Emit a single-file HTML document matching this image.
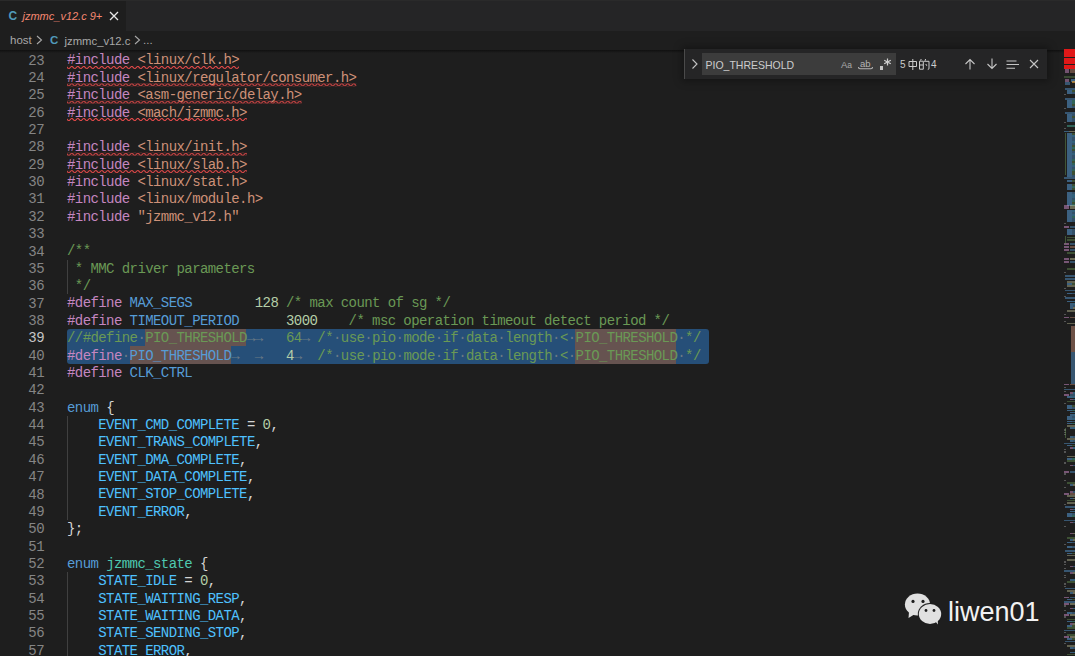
<!DOCTYPE html><html><head><meta charset="utf-8"><style>
*{margin:0;padding:0;box-sizing:border-box}
html,body{width:1075px;height:656px;overflow:hidden;background:#1e1e1e}
body{position:relative;font-family:"Liberation Sans",sans-serif}
.abs{position:absolute}
#tabbar{left:0;top:0;width:1075px;height:31px;background:#252526}
#topline{left:0;top:0;width:1075px;height:1px;background:#2a2a2a}
#tab{left:0;top:1px;width:126px;height:30px;background:#1e1e1e}
#crumbs{left:0;top:31px;width:1075px;height:18px;background:#1e1e1e}
.ln{position:absolute;left:0;width:44px;text-align:right;font-family:"Liberation Mono",monospace;font-size:14px;letter-spacing:-0.581px;color:#858585;white-space:pre}
.code{position:absolute;left:67px;font-family:"Liberation Mono",monospace;font-size:14px;letter-spacing:-0.581px;color:#D4D4D4;white-space:pre}
.kw{color:#C586C0}.st{color:#CE9178}.cm{color:#6A9955}.mac{color:#569CD6}.num{color:#B5CEA8}.en{color:#569CD6}.ty{color:#4EC9B0}.p{color:#D4D4D4}.em{color:#4FC1FF}
.ws{color:#6b7a86}
.guide{position:absolute;width:1px;background:#404040}
.sq{position:absolute;height:4px}
</style></head><body>
<div id="editor" class="abs" style="left:0;top:0;width:1075px;height:656px;overflow:hidden">

<div class="abs" style="left:67.0px;top:329.10px;width:642.0px;height:34.72px;background:#264F78;border-radius:3px"></div>
<div class="abs" style="left:145.20px;top:329.10px;width:101.16px;height:17.36px;background:rgba(234,92,0,0.33)"></div>
<div class="abs" style="left:575.30px;top:329.10px;width:101.16px;height:17.36px;background:rgba(234,92,0,0.33)"></div>
<div class="abs" style="left:129.56px;top:346.46px;width:101.16px;height:17.36px;background:rgba(234,92,0,0.33)"></div>
<div class="abs" style="left:575.30px;top:346.46px;width:101.16px;height:17.36px;background:rgba(234,92,0,0.33)"></div>
<div class="guide" style="left:67px;top:259.66px;height:34.72px"></div>
<div class="guide" style="left:67px;top:415.90px;height:104.16px"></div>
<div class="guide" style="left:67px;top:572.14px;height:86.80px"></div>
<div class="ln" style="top:35.18px;height:17.36px;line-height:17.36px;color:#858585">22</div>
<div class="ln" style="top:52.54px;height:17.36px;line-height:17.36px;color:#858585">23</div>
<div class="code" style="top:52.44px;height:17.36px;line-height:17.36px"><span class="kw">#include</span> <span class="st">&lt;linux/clk.h&gt;</span></div>
<div class="ln" style="top:69.90px;height:17.36px;line-height:17.36px;color:#858585">24</div>
<div class="code" style="top:69.80px;height:17.36px;line-height:17.36px"><span class="kw">#include</span> <span class="st">&lt;linux/regulator/consumer.h&gt;</span></div>
<div class="ln" style="top:87.26px;height:17.36px;line-height:17.36px;color:#858585">25</div>
<div class="code" style="top:87.16px;height:17.36px;line-height:17.36px"><span class="kw">#include</span> <span class="st">&lt;asm-generic/delay.h&gt;</span></div>
<div class="ln" style="top:104.62px;height:17.36px;line-height:17.36px;color:#858585">26</div>
<div class="code" style="top:104.52px;height:17.36px;line-height:17.36px"><span class="kw">#include</span> <span class="st">&lt;mach/jzmmc.h&gt;</span></div>
<div class="ln" style="top:121.98px;height:17.36px;line-height:17.36px;color:#858585">27</div>
<div class="ln" style="top:139.34px;height:17.36px;line-height:17.36px;color:#858585">28</div>
<div class="code" style="top:139.24px;height:17.36px;line-height:17.36px"><span class="kw">#include</span> <span class="st">&lt;linux/init.h&gt;</span></div>
<div class="ln" style="top:156.70px;height:17.36px;line-height:17.36px;color:#858585">29</div>
<div class="code" style="top:156.60px;height:17.36px;line-height:17.36px"><span class="kw">#include</span> <span class="st">&lt;linux/slab.h&gt;</span></div>
<div class="ln" style="top:174.06px;height:17.36px;line-height:17.36px;color:#858585">30</div>
<div class="code" style="top:173.96px;height:17.36px;line-height:17.36px"><span class="kw">#include</span> <span class="st">&lt;linux/stat.h&gt;</span></div>
<div class="ln" style="top:191.42px;height:17.36px;line-height:17.36px;color:#858585">31</div>
<div class="code" style="top:191.32px;height:17.36px;line-height:17.36px"><span class="kw">#include</span> <span class="st">&lt;linux/module.h&gt;</span></div>
<div class="ln" style="top:208.78px;height:17.36px;line-height:17.36px;color:#858585">32</div>
<div class="code" style="top:208.68px;height:17.36px;line-height:17.36px"><span class="kw">#include</span> <span class="st">"jzmmc_v12.h"</span></div>
<div class="ln" style="top:226.14px;height:17.36px;line-height:17.36px;color:#858585">33</div>
<div class="ln" style="top:243.50px;height:17.36px;line-height:17.36px;color:#858585">34</div>
<div class="code" style="top:243.40px;height:17.36px;line-height:17.36px"><span class="cm">/**</span></div>
<div class="ln" style="top:260.86px;height:17.36px;line-height:17.36px;color:#858585">35</div>
<div class="code" style="top:260.76px;height:17.36px;line-height:17.36px"><span class="cm"> * MMC driver parameters</span></div>
<div class="ln" style="top:278.22px;height:17.36px;line-height:17.36px;color:#858585">36</div>
<div class="code" style="top:278.12px;height:17.36px;line-height:17.36px"><span class="cm"> */</span></div>
<div class="ln" style="top:295.58px;height:17.36px;line-height:17.36px;color:#858585">37</div>
<div class="code" style="top:295.48px;height:17.36px;line-height:17.36px"><span class="kw">#define</span> <span class="mac">MAX_SEGS</span>        <span class="num">128</span> <span class="cm">/* max count of sg */</span></div>
<div class="ln" style="top:312.94px;height:17.36px;line-height:17.36px;color:#858585">38</div>
<div class="code" style="top:312.84px;height:17.36px;line-height:17.36px"><span class="kw">#define</span> <span class="mac">TIMEOUT_PERIOD</span>      <span class="num">3000</span>    <span class="cm">/* msc operation timeout detect period */</span></div>
<div class="ln" style="top:330.30px;height:17.36px;line-height:17.36px;color:#C6C6C6">39</div>
<div class="code" style="top:330.20px;height:17.36px;line-height:17.36px"><span class="cm">//#define</span><span class="ws">·</span><span class="cm">PIO_THRESHOLD</span><span class="ws">→</span><span class="ws">→</span>   <span class="cm">64</span><span class="ws">→</span> <span class="cm">/*</span><span class="ws">·</span><span class="cm">use</span><span class="ws">·</span><span class="cm">pio</span><span class="ws">·</span><span class="cm">mode</span><span class="ws">·</span><span class="cm">if</span><span class="ws">·</span><span class="cm">data</span><span class="ws">·</span><span class="cm">length</span><span class="ws">·</span><span class="cm">&lt;</span><span class="ws">·</span><span class="cm">PIO_THRESHOLD</span><span class="ws">·</span><span class="cm">*/</span></div>
<div class="ln" style="top:347.66px;height:17.36px;line-height:17.36px;color:#858585">40</div>
<div class="code" style="top:347.56px;height:17.36px;line-height:17.36px"><span class="kw">#define</span><span class="ws">·</span><span class="mac">PIO_THRESHOLD</span><span class="ws">→</span>  <span class="ws">→</span>   <span class="num">4</span><span class="ws">→</span>  <span class="cm">/*</span><span class="ws">·</span><span class="cm">use</span><span class="ws">·</span><span class="cm">pio</span><span class="ws">·</span><span class="cm">mode</span><span class="ws">·</span><span class="cm">if</span><span class="ws">·</span><span class="cm">data</span><span class="ws">·</span><span class="cm">length</span><span class="ws">·</span><span class="cm">&lt;</span><span class="ws">·</span><span class="cm">PIO_THRESHOLD</span><span class="ws">·</span><span class="cm">*/</span></div>
<div class="ln" style="top:365.02px;height:17.36px;line-height:17.36px;color:#858585">41</div>
<div class="code" style="top:364.92px;height:17.36px;line-height:17.36px"><span class="kw">#define</span> <span class="mac">CLK_CTRL</span></div>
<div class="ln" style="top:382.38px;height:17.36px;line-height:17.36px;color:#858585">42</div>
<div class="ln" style="top:399.74px;height:17.36px;line-height:17.36px;color:#858585">43</div>
<div class="code" style="top:399.64px;height:17.36px;line-height:17.36px"><span class="en">enum</span> <span class="p">{</span></div>
<div class="ln" style="top:417.10px;height:17.36px;line-height:17.36px;color:#858585">44</div>
<div class="code" style="top:417.00px;height:17.36px;line-height:17.36px">    <span class="em">EVENT_CMD_COMPLETE</span><span class="p"> = </span><span class="num">0</span><span class="p">,</span></div>
<div class="ln" style="top:434.46px;height:17.36px;line-height:17.36px;color:#858585">45</div>
<div class="code" style="top:434.36px;height:17.36px;line-height:17.36px">    <span class="em">EVENT_TRANS_COMPLETE</span><span class="p">,</span></div>
<div class="ln" style="top:451.82px;height:17.36px;line-height:17.36px;color:#858585">46</div>
<div class="code" style="top:451.72px;height:17.36px;line-height:17.36px">    <span class="em">EVENT_DMA_COMPLETE</span><span class="p">,</span></div>
<div class="ln" style="top:469.18px;height:17.36px;line-height:17.36px;color:#858585">47</div>
<div class="code" style="top:469.08px;height:17.36px;line-height:17.36px">    <span class="em">EVENT_DATA_COMPLETE</span><span class="p">,</span></div>
<div class="ln" style="top:486.54px;height:17.36px;line-height:17.36px;color:#858585">48</div>
<div class="code" style="top:486.44px;height:17.36px;line-height:17.36px">    <span class="em">EVENT_STOP_COMPLETE</span><span class="p">,</span></div>
<div class="ln" style="top:503.90px;height:17.36px;line-height:17.36px;color:#858585">49</div>
<div class="code" style="top:503.80px;height:17.36px;line-height:17.36px">    <span class="em">EVENT_ERROR</span><span class="p">,</span></div>
<div class="ln" style="top:521.26px;height:17.36px;line-height:17.36px;color:#858585">50</div>
<div class="code" style="top:521.16px;height:17.36px;line-height:17.36px"><span class="p">};</span></div>
<div class="ln" style="top:538.62px;height:17.36px;line-height:17.36px;color:#858585">51</div>
<div class="ln" style="top:555.98px;height:17.36px;line-height:17.36px;color:#858585">52</div>
<div class="code" style="top:555.88px;height:17.36px;line-height:17.36px"><span class="en">enum</span> <span class="ty">jzmmc_state</span> <span class="p">{</span></div>
<div class="ln" style="top:573.34px;height:17.36px;line-height:17.36px;color:#858585">53</div>
<div class="code" style="top:573.24px;height:17.36px;line-height:17.36px">    <span class="em">STATE_IDLE</span><span class="p"> = </span><span class="num">0</span><span class="p">,</span></div>
<div class="ln" style="top:590.70px;height:17.36px;line-height:17.36px;color:#858585">54</div>
<div class="code" style="top:590.60px;height:17.36px;line-height:17.36px">    <span class="em">STATE_WAITING_RESP</span><span class="p">,</span></div>
<div class="ln" style="top:608.06px;height:17.36px;line-height:17.36px;color:#858585">55</div>
<div class="code" style="top:607.96px;height:17.36px;line-height:17.36px">    <span class="em">STATE_WAITING_DATA</span><span class="p">,</span></div>
<div class="ln" style="top:625.42px;height:17.36px;line-height:17.36px;color:#858585">56</div>
<div class="code" style="top:625.32px;height:17.36px;line-height:17.36px">    <span class="em">STATE_SENDING_STOP</span><span class="p">,</span></div>
<div class="ln" style="top:642.78px;height:17.36px;line-height:17.36px;color:#858585">57</div>
<div class="code" style="top:642.68px;height:17.36px;line-height:17.36px">    <span class="em">STATE_ERROR</span><span class="p">,</span></div>
<div class="ln" style="top:660.14px;height:17.36px;line-height:17.36px;color:#858585">58</div>
</div>
<svg class="abs" style="left:0;top:0" width="1075" height="656"><defs><pattern id="sqp" patternUnits="userSpaceOnUse" x="67.00" y="0" width="6" height="3"><g fill="#F14C4C"><polygon points="5.5,0 2.5,3 1.1,3 4.1,0"/><polygon points="4,0 6,2 6,0.6 5.4,0"/><polygon points="0,2 1,3 2.4,3 0,0.6"/></g></pattern></defs>
<g transform="translate(0,65.94)"><rect x="67.0" y="0" width="172.04" height="3" fill="url(#sqp)"/></g>
<g transform="translate(0,83.30)"><rect x="67.0" y="0" width="289.34" height="3" fill="url(#sqp)"/></g>
<g transform="translate(0,100.66)"><rect x="67.0" y="0" width="234.60" height="3" fill="url(#sqp)"/></g>
<g transform="translate(0,118.02)"><rect x="67.0" y="0" width="179.86" height="3" fill="url(#sqp)"/></g>
<g transform="translate(0,152.74)"><rect x="67.0" y="0" width="179.86" height="3" fill="url(#sqp)"/></g>
<g transform="translate(0,170.10)"><rect x="67.0" y="0" width="179.86" height="3" fill="url(#sqp)"/></g>
</svg>

<div id="tabbar" class="abs"></div>
<div id="topline" class="abs"></div>
<div id="tab" class="abs"></div>
<div id="crumbs" class="abs"></div>
<div class="abs" style="left:0;top:49.5px;width:1064px;height:3px;background:linear-gradient(#101010,rgba(30,30,30,0))"></div>

<!-- tab -->
<div class="abs" style="left:8.5px;top:7.5px;font:bold 12px 'Liberation Sans',sans-serif;color:#519ABA;line-height:16px">C</div>
<div class="abs" style="left:22.5px;top:8px;font:italic 11px 'Liberation Sans',sans-serif;color:#F48771;line-height:16px;white-space:pre">jzmmc_v12.c 9+</div>
<svg class="abs" style="left:109px;top:11px" width="10" height="10" viewBox="0 0 10 10"><path d="M1 1 L9 9 M9 1 L1 9" stroke="#e8e8e8" stroke-width="1.3"/></svg>
<!-- breadcrumbs -->
<div class="abs" style="left:10px;top:32px;font:11.5px 'Liberation Sans',sans-serif;color:#a9a9a9;line-height:16px;white-space:pre">host</div>
<svg class="abs" style="left:36px;top:34px" width="7" height="12" viewBox="0 0 7 12"><path d="M1 2 L5.5 6 L1 10" stroke="#a9a9a9" stroke-width="1.1" fill="none"/></svg>
<div class="abs" style="left:50px;top:32px;font:bold 11.5px 'Liberation Sans',sans-serif;color:#519ABA;line-height:16px">C</div>
<div class="abs" style="left:64.5px;top:32.5px;font:11.3px 'Liberation Sans',sans-serif;color:#a9a9a9;line-height:16px;white-space:pre">jzmmc_v12.c</div>
<svg class="abs" style="left:134px;top:34px" width="7" height="12" viewBox="0 0 7 12"><path d="M1 2 L5.5 6 L1 10" stroke="#a9a9a9" stroke-width="1.1" fill="none"/></svg>
<div class="abs" style="left:143px;top:32px;font:11.5px 'Liberation Sans',sans-serif;color:#a9a9a9;line-height:16px;white-space:pre">...</div>
<!-- find widget -->
<div class="abs" style="left:684px;top:49px;width:363px;height:29.5px;background:#252526;box-shadow:0 0 8px 2px rgba(0,0,0,0.36)"></div>
<div class="abs" style="left:684px;top:49px;width:1px;height:29.5px;background:#4a4a4a"></div>
<svg class="abs" style="left:690px;top:57px" width="10" height="14" viewBox="0 0 10 14"><path d="M2.5 2.5 L7 7 L2.5 11.5" stroke="#c5c5c5" stroke-width="1.1" fill="none"/></svg>
<div class="abs" style="left:702px;top:53px;width:194px;height:22px;background:#3c3c3c"></div>
<div class="abs" style="left:705.5px;top:56.5px;font:10.5px 'Liberation Sans',sans-serif;color:#cccccc;line-height:16px;white-space:pre">PIO_THRESHOLD</div>
<div class="abs" style="left:841px;top:57.5px;font:9.5px 'Liberation Sans',sans-serif;color:#a9a9a9;line-height:14px;white-space:pre">A<span style="font-size:8.5px">a</span></div>
<div class="abs" style="left:860px;top:56.5px;font:9.5px 'Liberation Sans',sans-serif;color:#b5b5b5;line-height:14px;white-space:pre">ab</div>
<svg class="abs" style="left:857px;top:65px" width="17" height="6" viewBox="0 0 17 6"><path d="M1.5 2 Q1.5 3.8 3 3.8 H14 Q15.5 3.8 15.5 2" stroke="#b5b5b5" stroke-width="1.1" fill="none"/></svg>
<div class="abs" style="left:879.5px;top:66px;width:3.5px;height:3.5px;background:#c5c5c5"></div>
<svg class="abs" style="left:883px;top:57px" width="9" height="11" viewBox="0 0 9 11"><path d="M4.5 1.5 V8.5 M1.2 3.2 L7.8 6.8 M7.8 3.2 L1.2 6.8" stroke="#cfcfcf" stroke-width="1.2" fill="none"/></svg>
<div class="abs" style="left:900px;top:57px;font:10px 'Liberation Sans',sans-serif;color:#cccccc;line-height:16px;white-space:pre">5</div>
<svg class="abs" style="left:907px;top:58px" width="24" height="13" viewBox="0 0 24 13"><g stroke="#cccccc" stroke-width="1" fill="none"><path d="M2 3.5 H9.5 V8.5 H2 Z M5.8 1 V12"/><path d="M14.2 1 L13.6 2.6 M12.5 3.2 H16.3 V11.2 H12.5 Z M12.5 7 H16.3 M18.6 1 L17.6 4 M18.2 3.3 H22 V10.8 L20.8 11.5 M18.8 6 L19.8 7.8"/></g></svg>
<div class="abs" style="left:931px;top:57px;font:10px 'Liberation Sans',sans-serif;color:#cccccc;line-height:16px;white-space:pre">4</div>
<svg class="abs" style="left:963px;top:57px" width="14" height="14" viewBox="0 0 14 14"><path d="M7 2.5 V12.5 M2.5 7 L7 2.5 L11.5 7" stroke="#c5c5c5" stroke-width="1.1" fill="none"/></svg>
<svg class="abs" style="left:985px;top:57px" width="14" height="14" viewBox="0 0 14 14"><path d="M7 1.5 V11.5 M2.5 7 L7 11.5 L11.5 7" stroke="#c5c5c5" stroke-width="1.1" fill="none"/></svg>
<svg class="abs" style="left:1006px;top:57px" width="14" height="14" viewBox="0 0 14 14"><path d="M0.5 4 H10.5 M0.5 7.5 H13 M0.5 11.2 H9" stroke="#c5c5c5" stroke-width="1.1" fill="none"/></svg>
<svg class="abs" style="left:1028px;top:57px" width="12" height="14" viewBox="0 0 12 14"><path d="M2 3 L10 11 M10 3 L2 11" stroke="#c5c5c5" stroke-width="1.1" fill="none"/></svg>
<!-- wechat -->
<svg class="abs" style="left:900px;top:585px" width="50" height="45" viewBox="0 0 50 45">
<g fill="#e0e0e0">
<ellipse cx="17.5" cy="19.5" rx="12.6" ry="11"/>
<path d="M9 27 L8.5 33 L15 29 Z"/>
</g>
<ellipse cx="30" cy="29" rx="12.2" ry="11" fill="#1e1e1e"/>
<g fill="#e0e0e0">
<ellipse cx="30" cy="29" rx="11.2" ry="10"/>
<path d="M35 36 L38 39.5 L37.5 33 Z"/>
</g>
<g fill="#1e1e1e">
<circle cx="13" cy="16.4" r="1.6"/><circle cx="23" cy="16.4" r="1.6"/>
<circle cx="26" cy="25.5" r="1.4"/><circle cx="34" cy="25.5" r="1.4"/>
</g>
</svg>
<div class="abs" style="left:948px;top:594.5px;font:27px 'Liberation Sans',sans-serif;color:#f2f2f2;line-height:34px;white-space:pre">liwen01</div>

<div class="abs" style="left:1064px;top:49.3px;width:11px;height:7.9px;background:#e01818;opacity:1.00"></div>
<div class="abs" style="left:1064px;top:57.8px;width:11px;height:6.1px;background:#e01818;opacity:1.00"></div>
<div class="abs" style="left:1064px;top:65.0px;width:11px;height:3.8px;background:#e01818;opacity:1.00"></div>
<div class="abs" style="left:1065px;top:69.2px;width:4px;height:3.5px;background:#C586C0;opacity:0.50"></div>
<div class="abs" style="left:1070px;top:69.2px;width:5px;height:3.5px;background:#CE9178;opacity:0.41"></div>
<div class="abs" style="left:1064px;top:75.5px;width:11px;height:2px;background:#6A9955;opacity:0.36"></div>
<div class="abs" style="left:1065px;top:78.5px;width:4px;height:3.5px;background:#C586C0;opacity:0.50"></div>
<div class="abs" style="left:1071px;top:78.5px;width:4px;height:3.5px;background:#569CD6;opacity:0.54"></div>
<div class="abs" style="left:1072px;top:81.0px;width:3px;height:2px;background:#e8a33c;opacity:0.63"></div>
<div class="abs" style="left:1065px;top:82.0px;width:5px;height:3px;background:#569CD6;opacity:0.45"></div>
<div class="abs" style="left:1065px;top:88.0px;width:10px;height:1.5px;background:#569CD6;opacity:0.45"></div>
<div class="abs" style="left:1067px;top:90.0px;width:5px;height:1.5px;background:#569CD6;opacity:0.54"></div>
<div class="abs" style="left:1072px;top:90.0px;width:3px;height:1.5px;background:#6A9955;opacity:0.41"></div>
<div class="abs" style="left:1067px;top:92.0px;width:5px;height:1.5px;background:#569CD6;opacity:0.54"></div>
<div class="abs" style="left:1072px;top:92.0px;width:3px;height:1.5px;background:#569CD6;opacity:0.41"></div>
<div class="abs" style="left:1064px;top:94.0px;width:2px;height:1.2px;background:#9a9a9a;opacity:0.45"></div>
<div class="abs" style="left:1065px;top:98.0px;width:10px;height:1.5px;background:#569CD6;opacity:0.45"></div>
<div class="abs" style="left:1067px;top:100.0px;width:5px;height:1.5px;background:#569CD6;opacity:0.54"></div>
<div class="abs" style="left:1072px;top:100.0px;width:3px;height:1.5px;background:#4EC9B0;opacity:0.41"></div>
<div class="abs" style="left:1067px;top:102.0px;width:5px;height:1.5px;background:#569CD6;opacity:0.54"></div>
<div class="abs" style="left:1072px;top:102.0px;width:3px;height:1.5px;background:#4EC9B0;opacity:0.41"></div>
<div class="abs" style="left:1067px;top:104.0px;width:5px;height:1.5px;background:#569CD6;opacity:0.54"></div>
<div class="abs" style="left:1072px;top:104.0px;width:3px;height:1.5px;background:#6A9955;opacity:0.41"></div>
<div class="abs" style="left:1067px;top:106.0px;width:5px;height:1.5px;background:#569CD6;opacity:0.54"></div>
<div class="abs" style="left:1072px;top:106.0px;width:3px;height:1.5px;background:#569CD6;opacity:0.41"></div>
<div class="abs" style="left:1064px;top:108.0px;width:2px;height:1.2px;background:#9a9a9a;opacity:0.45"></div>
<div class="abs" style="left:1065px;top:112.0px;width:10px;height:1.5px;background:#569CD6;opacity:0.45"></div>
<div class="abs" style="left:1067px;top:114.0px;width:5px;height:1.5px;background:#569CD6;opacity:0.54"></div>
<div class="abs" style="left:1072px;top:114.0px;width:3px;height:1.5px;background:#569CD6;opacity:0.41"></div>
<div class="abs" style="left:1067px;top:116.0px;width:5px;height:1.5px;background:#569CD6;opacity:0.54"></div>
<div class="abs" style="left:1072px;top:116.0px;width:3px;height:1.5px;background:#6A9955;opacity:0.41"></div>
<div class="abs" style="left:1067px;top:118.0px;width:5px;height:1.5px;background:#569CD6;opacity:0.54"></div>
<div class="abs" style="left:1072px;top:118.0px;width:3px;height:1.5px;background:#569CD6;opacity:0.41"></div>
<div class="abs" style="left:1067px;top:120.0px;width:5px;height:1.5px;background:#569CD6;opacity:0.54"></div>
<div class="abs" style="left:1072px;top:120.0px;width:3px;height:1.5px;background:#569CD6;opacity:0.41"></div>
<div class="abs" style="left:1064px;top:122.0px;width:2px;height:1.2px;background:#9a9a9a;opacity:0.45"></div>
<div class="abs" style="left:1067px;top:125.0px;width:8px;height:1.5px;background:#4EC9B0;opacity:0.41"></div>
<div class="abs" style="left:1064px;top:128.0px;width:2px;height:1.2px;background:#9a9a9a;opacity:0.45"></div>
<div class="abs" style="left:1064px;top:130.5px;width:5px;height:1.5px;background:#569CD6;opacity:0.50"></div>
<div class="abs" style="left:1069px;top:130.5px;width:6px;height:1.5px;background:#DCDCAA;opacity:0.41"></div>
<div class="abs" style="left:1067px;top:133.0px;width:5px;height:1.5px;background:#569CD6;opacity:0.54"></div>
<div class="abs" style="left:1072px;top:133.0px;width:3px;height:1.5px;background:#6A9955;opacity:0.41"></div>
<div class="abs" style="left:1067px;top:135.0px;width:5px;height:1.5px;background:#569CD6;opacity:0.54"></div>
<div class="abs" style="left:1072px;top:135.0px;width:3px;height:1.5px;background:#4FC1FF;opacity:0.41"></div>
<div class="abs" style="left:1067px;top:137.0px;width:5px;height:1.5px;background:#569CD6;opacity:0.54"></div>
<div class="abs" style="left:1072px;top:137.0px;width:3px;height:1.5px;background:#569CD6;opacity:0.41"></div>
<div class="abs" style="left:1067px;top:139.0px;width:5px;height:1.5px;background:#569CD6;opacity:0.54"></div>
<div class="abs" style="left:1072px;top:139.0px;width:3px;height:1.5px;background:#569CD6;opacity:0.41"></div>
<div class="abs" style="left:1067px;top:141.0px;width:5px;height:1.5px;background:#569CD6;opacity:0.54"></div>
<div class="abs" style="left:1072px;top:141.0px;width:3px;height:1.5px;background:#4FC1FF;opacity:0.41"></div>
<div class="abs" style="left:1067px;top:143.0px;width:5px;height:1.5px;background:#569CD6;opacity:0.54"></div>
<div class="abs" style="left:1072px;top:143.0px;width:3px;height:1.5px;background:#569CD6;opacity:0.41"></div>
<div class="abs" style="left:1067px;top:145.0px;width:5px;height:1.5px;background:#569CD6;opacity:0.54"></div>
<div class="abs" style="left:1072px;top:145.0px;width:3px;height:1.5px;background:#6A9955;opacity:0.41"></div>
<div class="abs" style="left:1067px;top:147.0px;width:5px;height:1.5px;background:#569CD6;opacity:0.54"></div>
<div class="abs" style="left:1072px;top:147.0px;width:3px;height:1.5px;background:#4EC9B0;opacity:0.41"></div>
<div class="abs" style="left:1067px;top:149.0px;width:5px;height:1.5px;background:#569CD6;opacity:0.54"></div>
<div class="abs" style="left:1072px;top:149.0px;width:3px;height:1.5px;background:#6A9955;opacity:0.41"></div>
<div class="abs" style="left:1067px;top:151.0px;width:5px;height:1.5px;background:#569CD6;opacity:0.54"></div>
<div class="abs" style="left:1072px;top:151.0px;width:3px;height:1.5px;background:#569CD6;opacity:0.41"></div>
<div class="abs" style="left:1067px;top:153.0px;width:5px;height:1.5px;background:#569CD6;opacity:0.54"></div>
<div class="abs" style="left:1072px;top:153.0px;width:3px;height:1.5px;background:#4FC1FF;opacity:0.41"></div>
<div class="abs" style="left:1067px;top:155.0px;width:5px;height:1.5px;background:#569CD6;opacity:0.54"></div>
<div class="abs" style="left:1072px;top:155.0px;width:3px;height:1.5px;background:#569CD6;opacity:0.41"></div>
<div class="abs" style="left:1067px;top:157.0px;width:5px;height:1.5px;background:#569CD6;opacity:0.54"></div>
<div class="abs" style="left:1072px;top:157.0px;width:3px;height:1.5px;background:#569CD6;opacity:0.41"></div>
<div class="abs" style="left:1067px;top:159.0px;width:5px;height:1.5px;background:#569CD6;opacity:0.54"></div>
<div class="abs" style="left:1072px;top:159.0px;width:3px;height:1.5px;background:#4EC9B0;opacity:0.41"></div>
<div class="abs" style="left:1067px;top:161.0px;width:5px;height:1.5px;background:#569CD6;opacity:0.54"></div>
<div class="abs" style="left:1072px;top:161.0px;width:3px;height:1.5px;background:#6A9955;opacity:0.41"></div>
<div class="abs" style="left:1067px;top:163.0px;width:5px;height:1.5px;background:#569CD6;opacity:0.54"></div>
<div class="abs" style="left:1072px;top:163.0px;width:3px;height:1.5px;background:#4EC9B0;opacity:0.41"></div>
<div class="abs" style="left:1067px;top:165.0px;width:5px;height:1.5px;background:#569CD6;opacity:0.54"></div>
<div class="abs" style="left:1072px;top:165.0px;width:3px;height:1.5px;background:#4FC1FF;opacity:0.41"></div>
<div class="abs" style="left:1067px;top:167.0px;width:5px;height:1.5px;background:#569CD6;opacity:0.54"></div>
<div class="abs" style="left:1072px;top:167.0px;width:3px;height:1.5px;background:#569CD6;opacity:0.41"></div>
<div class="abs" style="left:1067px;top:169.0px;width:5px;height:1.5px;background:#569CD6;opacity:0.54"></div>
<div class="abs" style="left:1072px;top:169.0px;width:3px;height:1.5px;background:#4EC9B0;opacity:0.41"></div>
<div class="abs" style="left:1067px;top:171.0px;width:5px;height:1.5px;background:#569CD6;opacity:0.54"></div>
<div class="abs" style="left:1072px;top:171.0px;width:3px;height:1.5px;background:#6A9955;opacity:0.41"></div>
<div class="abs" style="left:1067px;top:173.0px;width:5px;height:1.5px;background:#569CD6;opacity:0.54"></div>
<div class="abs" style="left:1072px;top:173.0px;width:3px;height:1.5px;background:#6A9955;opacity:0.41"></div>
<div class="abs" style="left:1067px;top:175.0px;width:5px;height:1.5px;background:#569CD6;opacity:0.54"></div>
<div class="abs" style="left:1072px;top:175.0px;width:3px;height:1.5px;background:#569CD6;opacity:0.41"></div>
<div class="abs" style="left:1064px;top:177.0px;width:11px;height:1.5px;background:#569CD6;opacity:0.45"></div>
<div class="abs" style="left:1067px;top:180.0px;width:5px;height:1.5px;background:#569CD6;opacity:0.54"></div>
<div class="abs" style="left:1072px;top:180.0px;width:3px;height:1.5px;background:#6A9955;opacity:0.41"></div>
<div class="abs" style="left:1067px;top:184.0px;width:5px;height:1.5px;background:#569CD6;opacity:0.54"></div>
<div class="abs" style="left:1072px;top:184.0px;width:3px;height:1.5px;background:#6A9955;opacity:0.41"></div>
<div class="abs" style="left:1067px;top:186.0px;width:5px;height:1.5px;background:#569CD6;opacity:0.54"></div>
<div class="abs" style="left:1072px;top:186.0px;width:3px;height:1.5px;background:#4EC9B0;opacity:0.41"></div>
<div class="abs" style="left:1067px;top:188.0px;width:5px;height:1.5px;background:#569CD6;opacity:0.54"></div>
<div class="abs" style="left:1072px;top:188.0px;width:3px;height:1.5px;background:#6A9955;opacity:0.41"></div>
<div class="abs" style="left:1067px;top:192.0px;width:5px;height:1.5px;background:#569CD6;opacity:0.54"></div>
<div class="abs" style="left:1072px;top:192.0px;width:3px;height:1.5px;background:#569CD6;opacity:0.41"></div>
<div class="abs" style="left:1067px;top:194.0px;width:5px;height:1.5px;background:#569CD6;opacity:0.54"></div>
<div class="abs" style="left:1072px;top:194.0px;width:3px;height:1.5px;background:#4FC1FF;opacity:0.41"></div>
<div class="abs" style="left:1067px;top:196.0px;width:5px;height:1.5px;background:#569CD6;opacity:0.54"></div>
<div class="abs" style="left:1072px;top:196.0px;width:3px;height:1.5px;background:#4FC1FF;opacity:0.41"></div>
<div class="abs" style="left:1067px;top:198.0px;width:5px;height:1.5px;background:#569CD6;opacity:0.54"></div>
<div class="abs" style="left:1072px;top:198.0px;width:3px;height:1.5px;background:#569CD6;opacity:0.41"></div>
<div class="abs" style="left:1067px;top:200.0px;width:5px;height:1.5px;background:#569CD6;opacity:0.54"></div>
<div class="abs" style="left:1072px;top:200.0px;width:3px;height:1.5px;background:#4EC9B0;opacity:0.41"></div>
<div class="abs" style="left:1067px;top:202.0px;width:5px;height:1.5px;background:#569CD6;opacity:0.54"></div>
<div class="abs" style="left:1072px;top:202.0px;width:3px;height:1.5px;background:#6A9955;opacity:0.41"></div>
<div class="abs" style="left:1067px;top:204.0px;width:5px;height:1.5px;background:#569CD6;opacity:0.54"></div>
<div class="abs" style="left:1072px;top:204.0px;width:3px;height:1.5px;background:#4EC9B0;opacity:0.41"></div>
<div class="abs" style="left:1064px;top:205.0px;width:5px;height:1.5px;background:#C586C0;opacity:0.54"></div>
<div class="abs" style="left:1070px;top:205.0px;width:5px;height:1.5px;background:#DCDCAA;opacity:0.41"></div>
<div class="abs" style="left:1064px;top:207.0px;width:5px;height:1.5px;background:#C586C0;opacity:0.54"></div>
<div class="abs" style="left:1070px;top:207.0px;width:5px;height:1.5px;background:#DCDCAA;opacity:0.41"></div>
<div class="abs" style="left:1067px;top:210.0px;width:5px;height:1.5px;background:#569CD6;opacity:0.54"></div>
<div class="abs" style="left:1072px;top:210.0px;width:3px;height:1.5px;background:#4FC1FF;opacity:0.41"></div>
<div class="abs" style="left:1067px;top:212.0px;width:5px;height:1.5px;background:#569CD6;opacity:0.54"></div>
<div class="abs" style="left:1072px;top:212.0px;width:3px;height:1.5px;background:#569CD6;opacity:0.41"></div>
<div class="abs" style="left:1067px;top:214.0px;width:5px;height:1.5px;background:#569CD6;opacity:0.54"></div>
<div class="abs" style="left:1072px;top:214.0px;width:3px;height:1.5px;background:#4FC1FF;opacity:0.41"></div>
<div class="abs" style="left:1067px;top:216.0px;width:5px;height:1.5px;background:#569CD6;opacity:0.54"></div>
<div class="abs" style="left:1072px;top:216.0px;width:3px;height:1.5px;background:#4EC9B0;opacity:0.41"></div>
<div class="abs" style="left:1067px;top:218.0px;width:5px;height:1.5px;background:#569CD6;opacity:0.54"></div>
<div class="abs" style="left:1072px;top:218.0px;width:3px;height:1.5px;background:#569CD6;opacity:0.41"></div>
<div class="abs" style="left:1067px;top:220.0px;width:5px;height:1.5px;background:#569CD6;opacity:0.54"></div>
<div class="abs" style="left:1072px;top:220.0px;width:3px;height:1.5px;background:#569CD6;opacity:0.41"></div>
<div class="abs" style="left:1064px;top:222.5px;width:2px;height:1.2px;background:#9a9a9a;opacity:0.45"></div>
<div class="abs" style="left:1064px;top:226.0px;width:5px;height:1.5px;background:#C586C0;opacity:0.54"></div>
<div class="abs" style="left:1070px;top:226.0px;width:5px;height:1.5px;background:#569CD6;opacity:0.41"></div>
<div class="abs" style="left:1067px;top:229.0px;width:5px;height:1.5px;background:#569CD6;opacity:0.54"></div>
<div class="abs" style="left:1072px;top:229.0px;width:3px;height:1.5px;background:#569CD6;opacity:0.41"></div>
<div class="abs" style="left:1067px;top:231.0px;width:5px;height:1.5px;background:#569CD6;opacity:0.54"></div>
<div class="abs" style="left:1072px;top:231.0px;width:3px;height:1.5px;background:#569CD6;opacity:0.41"></div>
<div class="abs" style="left:1067px;top:233.0px;width:5px;height:1.5px;background:#569CD6;opacity:0.54"></div>
<div class="abs" style="left:1072px;top:233.0px;width:3px;height:1.5px;background:#569CD6;opacity:0.41"></div>
<div class="abs" style="left:1067px;top:236.5px;width:8px;height:1.5px;background:#6A9955;opacity:0.41"></div>
<div class="abs" style="left:1067px;top:239.0px;width:8px;height:1.5px;background:#6A9955;opacity:0.41"></div>
<div class="abs" style="left:1064px;top:243.0px;width:5px;height:1.5px;background:#C586C0;opacity:0.54"></div>
<div class="abs" style="left:1070px;top:243.0px;width:5px;height:1.5px;background:#569CD6;opacity:0.41"></div>
<div class="abs" style="left:1064px;top:246.0px;width:5px;height:1.5px;background:#C586C0;opacity:0.54"></div>
<div class="abs" style="left:1070px;top:246.0px;width:5px;height:1.5px;background:#CE9178;opacity:0.41"></div>
<div class="abs" style="left:1064px;top:249.0px;width:5px;height:1.5px;background:#C586C0;opacity:0.54"></div>
<div class="abs" style="left:1070px;top:249.0px;width:5px;height:1.5px;background:#569CD6;opacity:0.41"></div>
<div class="abs" style="left:1067px;top:252.0px;width:8px;height:1.5px;background:#6A9955;opacity:0.41"></div>
<div class="abs" style="left:1064px;top:258.0px;width:5px;height:1.5px;background:#C586C0;opacity:0.54"></div>
<div class="abs" style="left:1070px;top:258.0px;width:5px;height:1.5px;background:#DCDCAA;opacity:0.41"></div>
<div class="abs" style="left:1064px;top:261.0px;width:5px;height:1.5px;background:#C586C0;opacity:0.54"></div>
<div class="abs" style="left:1070px;top:261.0px;width:5px;height:1.5px;background:#569CD6;opacity:0.41"></div>
<div class="abs" style="left:1067px;top:268.0px;width:8px;height:1.5px;background:#6A9955;opacity:0.41"></div>
<div class="abs" style="left:1064px;top:271.5px;width:2px;height:1.2px;background:#9a9a9a;opacity:0.45"></div>
<div class="abs" style="left:1065px;top:275.0px;width:10px;height:1.5px;background:#569CD6;opacity:0.45"></div>
<div class="abs" style="left:1065px;top:278.0px;width:10px;height:1.5px;background:#569CD6;opacity:0.45"></div>
<div class="abs" style="left:1067px;top:281.0px;width:8px;height:1.5px;background:#DCDCAA;opacity:0.36"></div>
<div class="abs" style="left:1067px;top:283.0px;width:5px;height:1.5px;background:#569CD6;opacity:0.54"></div>
<div class="abs" style="left:1072px;top:283.0px;width:3px;height:1.5px;background:#6A9955;opacity:0.41"></div>
<div class="abs" style="left:1067px;top:285.0px;width:8px;height:1.5px;background:#DCDCAA;opacity:0.36"></div>
<div class="abs" style="left:1064px;top:287.5px;width:2px;height:1.2px;background:#9a9a9a;opacity:0.45"></div>
<div class="abs" style="left:1065px;top:289.5px;width:10px;height:1.5px;background:#569CD6;opacity:0.45"></div>
<div class="abs" style="left:1067px;top:292.5px;width:5px;height:1.5px;background:#569CD6;opacity:0.54"></div>
<div class="abs" style="left:1072px;top:292.5px;width:3px;height:1.5px;background:#569CD6;opacity:0.41"></div>
<div class="abs" style="left:1064px;top:295.5px;width:2px;height:1.2px;background:#9a9a9a;opacity:0.45"></div>
<div class="abs" style="left:1065px;top:297.0px;width:10px;height:1.5px;background:#569CD6;opacity:0.45"></div>
<div class="abs" style="left:1067px;top:300.5px;width:5px;height:1.5px;background:#569CD6;opacity:0.54"></div>
<div class="abs" style="left:1072px;top:300.5px;width:3px;height:1.5px;background:#4FC1FF;opacity:0.41"></div>
<div class="abs" style="left:1070px;top:303.0px;width:3px;height:1.5px;background:#569CD6;opacity:0.50"></div>
<div class="abs" style="left:1073px;top:303.0px;width:2px;height:1.5px;background:#4FC1FF;opacity:0.41"></div>
<div class="abs" style="left:1070px;top:305.0px;width:3px;height:1.5px;background:#569CD6;opacity:0.50"></div>
<div class="abs" style="left:1073px;top:305.0px;width:2px;height:1.5px;background:#569CD6;opacity:0.41"></div>
<div class="abs" style="left:1070px;top:307.0px;width:3px;height:1.5px;background:#569CD6;opacity:0.50"></div>
<div class="abs" style="left:1073px;top:307.0px;width:2px;height:1.5px;background:#DCDCAA;opacity:0.41"></div>
<div class="abs" style="left:1067px;top:310.0px;width:8px;height:1.5px;background:#DCDCAA;opacity:0.36"></div>
<div class="abs" style="left:1064px;top:313.5px;width:2px;height:1.2px;background:#9a9a9a;opacity:0.45"></div>
<div class="abs" style="left:1064px;top:316.5px;width:5px;height:1.5px;background:#C586C0;opacity:0.54"></div>
<div class="abs" style="left:1070px;top:316.5px;width:5px;height:1.5px;background:#CE9178;opacity:0.41"></div>
<div class="abs" style="left:1064px;top:320.5px;width:2px;height:1.2px;background:#9a9a9a;opacity:0.45"></div>
<div class="abs" style="left:1067px;top:322.5px;width:8px;height:1.5px;background:#DCDCAA;opacity:0.36"></div>
<div class="abs" style="left:1071px;top:326.0px;width:4px;height:1.5px;background:#CE9178;opacity:0.45"></div>
<div class="abs" style="left:1071px;top:328.0px;width:4px;height:1.5px;background:#CE9178;opacity:0.45"></div>
<div class="abs" style="left:1071px;top:330.0px;width:4px;height:1.5px;background:#CE9178;opacity:0.45"></div>
<div class="abs" style="left:1071px;top:332.0px;width:4px;height:1.5px;background:#CE9178;opacity:0.45"></div>
<div class="abs" style="left:1071px;top:334.0px;width:4px;height:1.5px;background:#CE9178;opacity:0.45"></div>
<div class="abs" style="left:1071px;top:336.0px;width:4px;height:1.5px;background:#CE9178;opacity:0.45"></div>
<div class="abs" style="left:1071px;top:338.0px;width:4px;height:1.5px;background:#CE9178;opacity:0.45"></div>
<div class="abs" style="left:1071px;top:340.0px;width:4px;height:1.5px;background:#CE9178;opacity:0.45"></div>
<div class="abs" style="left:1071px;top:342.0px;width:4px;height:1.5px;background:#CE9178;opacity:0.45"></div>
<div class="abs" style="left:1071px;top:344.0px;width:4px;height:1.5px;background:#CE9178;opacity:0.45"></div>
<div class="abs" style="left:1071px;top:346.0px;width:4px;height:1.5px;background:#CE9178;opacity:0.45"></div>
<div class="abs" style="left:1071px;top:348.0px;width:4px;height:1.5px;background:#CE9178;opacity:0.45"></div>
<div class="abs" style="left:1071px;top:350.0px;width:4px;height:1.5px;background:#CE9178;opacity:0.45"></div>
<div class="abs" style="left:1071px;top:352.0px;width:4px;height:1.5px;background:#569CD6;opacity:0.45"></div>
<div class="abs" style="left:1071px;top:354.0px;width:4px;height:1.5px;background:#569CD6;opacity:0.45"></div>
<div class="abs" style="left:1071px;top:356.0px;width:4px;height:1.5px;background:#569CD6;opacity:0.45"></div>
<div class="abs" style="left:1071px;top:358.0px;width:4px;height:1.5px;background:#569CD6;opacity:0.45"></div>
<div class="abs" style="left:1071px;top:360.0px;width:4px;height:1.5px;background:#569CD6;opacity:0.45"></div>
<div class="abs" style="left:1071px;top:362.0px;width:4px;height:1.5px;background:#569CD6;opacity:0.45"></div>
<div class="abs" style="left:1071px;top:364.0px;width:4px;height:1.5px;background:#569CD6;opacity:0.45"></div>
<div class="abs" style="left:1071px;top:366.0px;width:4px;height:1.5px;background:#569CD6;opacity:0.45"></div>
<div class="abs" style="left:1071px;top:368.0px;width:4px;height:1.5px;background:#569CD6;opacity:0.45"></div>
<div class="abs" style="left:1071px;top:370.0px;width:4px;height:1.5px;background:#569CD6;opacity:0.45"></div>
<div class="abs" style="left:1071px;top:372.0px;width:4px;height:1.5px;background:#569CD6;opacity:0.45"></div>
<div class="abs" style="left:1071px;top:374.0px;width:4px;height:1.5px;background:#569CD6;opacity:0.45"></div>
<div class="abs" style="left:1071px;top:376.0px;width:4px;height:1.5px;background:#569CD6;opacity:0.45"></div>
<div class="abs" style="left:1071px;top:378.0px;width:4px;height:1.5px;background:#569CD6;opacity:0.45"></div>
<div class="abs" style="left:1071px;top:380.0px;width:4px;height:1.5px;background:#569CD6;opacity:0.45"></div>
<div class="abs" style="left:1071px;top:382.0px;width:4px;height:1.5px;background:#569CD6;opacity:0.45"></div>
<div class="abs" style="left:1064px;top:383.5px;width:5px;height:1.5px;background:#C586C0;opacity:0.54"></div>
<div class="abs" style="left:1070px;top:383.5px;width:5px;height:1.5px;background:#CE9178;opacity:0.41"></div>
<div class="abs" style="left:1064px;top:386.5px;width:2px;height:1.2px;background:#9a9a9a;opacity:0.45"></div>
<div class="abs" style="left:1064px;top:388.5px;width:11px;height:1.5px;background:#569CD6;opacity:0.45"></div>
<div class="abs" style="left:1064px;top:390.5px;width:2px;height:1.2px;background:#9a9a9a;opacity:0.45"></div>
<div class="abs" style="left:1070px;top:392.0px;width:3px;height:1.5px;background:#C586C0;opacity:0.50"></div>
<div class="abs" style="left:1073px;top:392.0px;width:2px;height:1.5px;background:#4FC1FF;opacity:0.41"></div>
<div class="abs" style="left:1064px;top:394.2px;width:5px;height:1.5px;background:#C586C0;opacity:0.54"></div>
<div class="abs" style="left:1070px;top:394.2px;width:5px;height:1.5px;background:#569CD6;opacity:0.41"></div>
<div class="abs" style="left:1067px;top:396.4px;width:5px;height:1.5px;background:#569CD6;opacity:0.54"></div>
<div class="abs" style="left:1072px;top:396.4px;width:3px;height:1.5px;background:#4FC1FF;opacity:0.41"></div>
<div class="abs" style="left:1070px;top:398.6px;width:3px;height:1.5px;background:#C586C0;opacity:0.50"></div>
<div class="abs" style="left:1073px;top:398.6px;width:2px;height:1.5px;background:#4FC1FF;opacity:0.41"></div>
<div class="abs" style="left:1067px;top:400.8px;width:8px;height:1.5px;background:#6A9955;opacity:0.41"></div>
<div class="abs" style="left:1064px;top:403.0px;width:2px;height:1.2px;background:#9a9a9a;opacity:0.45"></div>
<div class="abs" style="left:1067px;top:405.2px;width:5px;height:1.5px;background:#569CD6;opacity:0.54"></div>
<div class="abs" style="left:1072px;top:405.2px;width:3px;height:1.5px;background:#6A9955;opacity:0.41"></div>
<div class="abs" style="left:1067px;top:407.4px;width:5px;height:1.5px;background:#569CD6;opacity:0.54"></div>
<div class="abs" style="left:1072px;top:407.4px;width:3px;height:1.5px;background:#569CD6;opacity:0.41"></div>
<div class="abs" style="left:1067px;top:409.6px;width:5px;height:1.5px;background:#569CD6;opacity:0.54"></div>
<div class="abs" style="left:1072px;top:409.6px;width:3px;height:1.5px;background:#4EC9B0;opacity:0.41"></div>
<div class="abs" style="left:1070px;top:411.8px;width:3px;height:1.5px;background:#569CD6;opacity:0.50"></div>
<div class="abs" style="left:1073px;top:411.8px;width:2px;height:1.5px;background:#4FC1FF;opacity:0.41"></div>
<div class="abs" style="left:1070px;top:414.0px;width:3px;height:1.5px;background:#569CD6;opacity:0.50"></div>
<div class="abs" style="left:1073px;top:414.0px;width:2px;height:1.5px;background:#4FC1FF;opacity:0.41"></div>
<div class="abs" style="left:1067px;top:416.2px;width:5px;height:1.5px;background:#569CD6;opacity:0.54"></div>
<div class="abs" style="left:1072px;top:416.2px;width:3px;height:1.5px;background:#569CD6;opacity:0.41"></div>
<div class="abs" style="left:1067px;top:418.4px;width:5px;height:1.5px;background:#569CD6;opacity:0.54"></div>
<div class="abs" style="left:1072px;top:418.4px;width:3px;height:1.5px;background:#4FC1FF;opacity:0.41"></div>
<div class="abs" style="left:1067px;top:420.6px;width:5px;height:1.5px;background:#569CD6;opacity:0.54"></div>
<div class="abs" style="left:1072px;top:420.6px;width:3px;height:1.5px;background:#569CD6;opacity:0.41"></div>
<div class="abs" style="left:1067px;top:422.8px;width:5px;height:1.5px;background:#569CD6;opacity:0.54"></div>
<div class="abs" style="left:1072px;top:422.8px;width:3px;height:1.5px;background:#4EC9B0;opacity:0.41"></div>
<div class="abs" style="left:1067px;top:425.0px;width:8px;height:1.5px;background:#DCDCAA;opacity:0.36"></div>
<div class="abs" style="left:1070px;top:427.2px;width:3px;height:1.5px;background:#569CD6;opacity:0.50"></div>
<div class="abs" style="left:1073px;top:427.2px;width:2px;height:1.5px;background:#4FC1FF;opacity:0.41"></div>
<div class="abs" style="left:1064px;top:429.4px;width:2px;height:1.2px;background:#9a9a9a;opacity:0.45"></div>
<div class="abs" style="left:1064px;top:431.6px;width:2px;height:1.2px;background:#9a9a9a;opacity:0.45"></div>
<div class="abs" style="left:1064px;top:433.8px;width:2px;height:1.2px;background:#9a9a9a;opacity:0.45"></div>
<div class="abs" style="left:1070px;top:436.0px;width:3px;height:1.5px;background:#569CD6;opacity:0.50"></div>
<div class="abs" style="left:1073px;top:436.0px;width:2px;height:1.5px;background:#569CD6;opacity:0.41"></div>
<div class="abs" style="left:1067px;top:438.2px;width:8px;height:1.5px;background:#DCDCAA;opacity:0.36"></div>
<div class="abs" style="left:1070px;top:440.4px;width:3px;height:1.5px;background:#569CD6;opacity:0.50"></div>
<div class="abs" style="left:1073px;top:440.4px;width:2px;height:1.5px;background:#569CD6;opacity:0.41"></div>
<div class="abs" style="left:1064px;top:442.6px;width:11px;height:1.5px;background:#569CD6;opacity:0.45"></div>
<div class="abs" style="left:1067px;top:444.8px;width:5px;height:1.5px;background:#569CD6;opacity:0.54"></div>
<div class="abs" style="left:1072px;top:444.8px;width:3px;height:1.5px;background:#6A9955;opacity:0.41"></div>
<div class="abs" style="left:1070px;top:447.0px;width:3px;height:1.5px;background:#C586C0;opacity:0.50"></div>
<div class="abs" style="left:1073px;top:447.0px;width:2px;height:1.5px;background:#4FC1FF;opacity:0.41"></div>
<div class="abs" style="left:1064px;top:449.2px;width:2px;height:1.2px;background:#9a9a9a;opacity:0.45"></div>
<div class="abs" style="left:1064px;top:451.4px;width:2px;height:1.2px;background:#9a9a9a;opacity:0.45"></div>
<div class="abs" style="left:1067px;top:455.8px;width:8px;height:1.5px;background:#DCDCAA;opacity:0.36"></div>
<div class="abs" style="left:1067px;top:458.0px;width:5px;height:1.5px;background:#569CD6;opacity:0.54"></div>
<div class="abs" style="left:1072px;top:458.0px;width:3px;height:1.5px;background:#4EC9B0;opacity:0.41"></div>
<div class="abs" style="left:1067px;top:460.2px;width:8px;height:1.5px;background:#6A9955;opacity:0.41"></div>
<div class="abs" style="left:1064px;top:462.4px;width:2px;height:1.2px;background:#9a9a9a;opacity:0.45"></div>
<div class="abs" style="left:1070px;top:464.6px;width:3px;height:1.5px;background:#C586C0;opacity:0.50"></div>
<div class="abs" style="left:1073px;top:464.6px;width:2px;height:1.5px;background:#569CD6;opacity:0.41"></div>
<div class="abs" style="left:1064px;top:471.2px;width:5px;height:1.5px;background:#C586C0;opacity:0.54"></div>
<div class="abs" style="left:1070px;top:471.2px;width:5px;height:1.5px;background:#569CD6;opacity:0.41"></div>
<div class="abs" style="left:1064px;top:473.4px;width:2px;height:1.2px;background:#9a9a9a;opacity:0.45"></div>
<div class="abs" style="left:1064px;top:480.0px;width:2px;height:1.2px;background:#9a9a9a;opacity:0.45"></div>
<div class="abs" style="left:1067px;top:482.2px;width:8px;height:1.5px;background:#6A9955;opacity:0.41"></div>
<div class="abs" style="left:1070px;top:484.4px;width:3px;height:1.5px;background:#569CD6;opacity:0.50"></div>
<div class="abs" style="left:1073px;top:484.4px;width:2px;height:1.5px;background:#DCDCAA;opacity:0.41"></div>
<div class="abs" style="left:1064px;top:486.6px;width:2px;height:1.2px;background:#9a9a9a;opacity:0.45"></div>
<div class="abs" style="left:1070px;top:491.0px;width:3px;height:1.5px;background:#C586C0;opacity:0.50"></div>
<div class="abs" style="left:1073px;top:491.0px;width:2px;height:1.5px;background:#569CD6;opacity:0.41"></div>
<div class="abs" style="left:1064px;top:493.2px;width:5px;height:1.5px;background:#C586C0;opacity:0.54"></div>
<div class="abs" style="left:1070px;top:493.2px;width:5px;height:1.5px;background:#CE9178;opacity:0.41"></div>
<div class="abs" style="left:1067px;top:495.4px;width:8px;height:1.5px;background:#DCDCAA;opacity:0.36"></div>
<div class="abs" style="left:1070px;top:497.6px;width:3px;height:1.5px;background:#569CD6;opacity:0.50"></div>
<div class="abs" style="left:1073px;top:497.6px;width:2px;height:1.5px;background:#DCDCAA;opacity:0.41"></div>
<div class="abs" style="left:1067px;top:499.8px;width:8px;height:1.5px;background:#6A9955;opacity:0.41"></div>
<div class="abs" style="left:1067px;top:502.0px;width:8px;height:1.5px;background:#DCDCAA;opacity:0.36"></div>
<div class="abs" style="left:1064px;top:504.2px;width:2px;height:1.2px;background:#9a9a9a;opacity:0.45"></div>
<div class="abs" style="left:1065px;top:506.4px;width:10px;height:1.5px;background:#569CD6;opacity:0.45"></div>
<div class="abs" style="left:1070px;top:508.6px;width:3px;height:1.5px;background:#C586C0;opacity:0.50"></div>
<div class="abs" style="left:1073px;top:508.6px;width:2px;height:1.5px;background:#4FC1FF;opacity:0.41"></div>
<div class="abs" style="left:1070px;top:510.8px;width:3px;height:1.5px;background:#569CD6;opacity:0.50"></div>
<div class="abs" style="left:1073px;top:510.8px;width:2px;height:1.5px;background:#4FC1FF;opacity:0.41"></div>
<div class="abs" style="left:1067px;top:513.0px;width:5px;height:1.5px;background:#569CD6;opacity:0.54"></div>
<div class="abs" style="left:1072px;top:513.0px;width:3px;height:1.5px;background:#569CD6;opacity:0.41"></div>
<div class="abs" style="left:1067px;top:515.2px;width:5px;height:1.5px;background:#569CD6;opacity:0.54"></div>
<div class="abs" style="left:1072px;top:515.2px;width:3px;height:1.5px;background:#4EC9B0;opacity:0.41"></div>
<div class="abs" style="left:1064px;top:519.6px;width:11px;height:1.5px;background:#569CD6;opacity:0.45"></div>
<div class="abs" style="left:1070px;top:521.8px;width:3px;height:1.5px;background:#C586C0;opacity:0.50"></div>
<div class="abs" style="left:1073px;top:521.8px;width:2px;height:1.5px;background:#569CD6;opacity:0.41"></div>
<div class="abs" style="left:1064px;top:526.2px;width:2px;height:1.2px;background:#9a9a9a;opacity:0.45"></div>
<div class="abs" style="left:1070px;top:532.8px;width:3px;height:1.5px;background:#C586C0;opacity:0.50"></div>
<div class="abs" style="left:1073px;top:532.8px;width:2px;height:1.5px;background:#DCDCAA;opacity:0.41"></div>
<div class="abs" style="left:1067px;top:537.2px;width:8px;height:1.5px;background:#6A9955;opacity:0.41"></div>
<div class="abs" style="left:1070px;top:539.4px;width:3px;height:1.5px;background:#569CD6;opacity:0.50"></div>
<div class="abs" style="left:1073px;top:539.4px;width:2px;height:1.5px;background:#DCDCAA;opacity:0.41"></div>
<div class="abs" style="left:1067px;top:541.6px;width:5px;height:1.5px;background:#569CD6;opacity:0.54"></div>
<div class="abs" style="left:1072px;top:541.6px;width:3px;height:1.5px;background:#569CD6;opacity:0.41"></div>
<div class="abs" style="left:1064px;top:543.8px;width:2px;height:1.2px;background:#9a9a9a;opacity:0.45"></div>
<div class="abs" style="left:1067px;top:546.0px;width:5px;height:1.5px;background:#569CD6;opacity:0.54"></div>
<div class="abs" style="left:1072px;top:546.0px;width:3px;height:1.5px;background:#569CD6;opacity:0.41"></div>
<div class="abs" style="left:1065px;top:550.4px;width:10px;height:1.5px;background:#569CD6;opacity:0.45"></div>
<div class="abs" style="left:1067px;top:552.6px;width:5px;height:1.5px;background:#569CD6;opacity:0.54"></div>
<div class="abs" style="left:1072px;top:552.6px;width:3px;height:1.5px;background:#6A9955;opacity:0.41"></div>
<div class="abs" style="left:1067px;top:554.8px;width:8px;height:1.5px;background:#DCDCAA;opacity:0.36"></div>
<div class="abs" style="left:1067px;top:559.2px;width:8px;height:1.5px;background:#DCDCAA;opacity:0.36"></div>
<div class="abs" style="left:1064px;top:561.4px;width:2px;height:1.2px;background:#9a9a9a;opacity:0.45"></div>
<div class="abs" style="left:1064px;top:563.6px;width:2px;height:1.2px;background:#9a9a9a;opacity:0.45"></div>
<div class="abs" style="left:1070px;top:565.8px;width:3px;height:1.5px;background:#C586C0;opacity:0.50"></div>
<div class="abs" style="left:1073px;top:565.8px;width:2px;height:1.5px;background:#569CD6;opacity:0.41"></div>
<div class="abs" style="left:1064px;top:568.0px;width:2px;height:1.2px;background:#9a9a9a;opacity:0.45"></div>
<div class="abs" style="left:1064px;top:570.2px;width:11px;height:1.5px;background:#569CD6;opacity:0.45"></div>
<div class="abs" style="left:1070px;top:572.4px;width:3px;height:1.5px;background:#C586C0;opacity:0.50"></div>
<div class="abs" style="left:1073px;top:572.4px;width:2px;height:1.5px;background:#DCDCAA;opacity:0.41"></div>
<div class="abs" style="left:1064px;top:574.6px;width:2px;height:1.2px;background:#9a9a9a;opacity:0.45"></div>
<div class="abs" style="left:1064px;top:576.8px;width:2px;height:1.2px;background:#9a9a9a;opacity:0.45"></div>
<div class="abs" style="left:1070px;top:579.0px;width:3px;height:1.5px;background:#569CD6;opacity:0.50"></div>
<div class="abs" style="left:1073px;top:579.0px;width:2px;height:1.5px;background:#4FC1FF;opacity:0.41"></div>
<div class="abs" style="left:1067px;top:581.2px;width:8px;height:1.5px;background:#6A9955;opacity:0.41"></div>
<div class="abs" style="left:1064px;top:583.4px;width:2px;height:1.2px;background:#9a9a9a;opacity:0.45"></div>
<div class="abs" style="left:1064px;top:585.6px;width:2px;height:1.2px;background:#9a9a9a;opacity:0.45"></div>
<div class="abs" style="left:1065px;top:587.8px;width:10px;height:1.5px;background:#569CD6;opacity:0.45"></div>
<div class="abs" style="left:1067px;top:590.0px;width:8px;height:1.5px;background:#DCDCAA;opacity:0.36"></div>
<div class="abs" style="left:1070px;top:592.2px;width:3px;height:1.5px;background:#569CD6;opacity:0.50"></div>
<div class="abs" style="left:1073px;top:592.2px;width:2px;height:1.5px;background:#DCDCAA;opacity:0.41"></div>
<div class="abs" style="left:1064px;top:596.6px;width:5px;height:1.5px;background:#C586C0;opacity:0.54"></div>
<div class="abs" style="left:1070px;top:596.6px;width:5px;height:1.5px;background:#569CD6;opacity:0.41"></div>
<div class="abs" style="left:1067px;top:598.8px;width:5px;height:1.5px;background:#569CD6;opacity:0.54"></div>
<div class="abs" style="left:1072px;top:598.8px;width:3px;height:1.5px;background:#6A9955;opacity:0.41"></div>
<div class="abs" style="left:1064px;top:601.0px;width:11px;height:1.5px;background:#569CD6;opacity:0.45"></div>
<div class="abs" style="left:1064px;top:603.2px;width:5px;height:1.5px;background:#C586C0;opacity:0.54"></div>
<div class="abs" style="left:1070px;top:603.2px;width:5px;height:1.5px;background:#DCDCAA;opacity:0.41"></div>
<div class="abs" style="left:1064px;top:605.4px;width:2px;height:1.2px;background:#9a9a9a;opacity:0.45"></div>
<div class="abs" style="left:1070px;top:607.6px;width:3px;height:1.5px;background:#C586C0;opacity:0.50"></div>
<div class="abs" style="left:1073px;top:607.6px;width:2px;height:1.5px;background:#4FC1FF;opacity:0.41"></div>
<div class="abs" style="left:1064px;top:609.8px;width:2px;height:1.2px;background:#9a9a9a;opacity:0.45"></div>
<div class="abs" style="left:1067px;top:612.0px;width:5px;height:1.5px;background:#569CD6;opacity:0.54"></div>
<div class="abs" style="left:1072px;top:612.0px;width:3px;height:1.5px;background:#569CD6;opacity:0.41"></div>
<div class="abs" style="left:1064px;top:614.2px;width:5px;height:1.5px;background:#C586C0;opacity:0.54"></div>
<div class="abs" style="left:1070px;top:614.2px;width:5px;height:1.5px;background:#DCDCAA;opacity:0.41"></div>
<div class="abs" style="left:1064px;top:616.4px;width:2px;height:1.2px;background:#9a9a9a;opacity:0.45"></div>
<div class="abs" style="left:1067px;top:618.6px;width:8px;height:1.5px;background:#6A9955;opacity:0.41"></div>
<div class="abs" style="left:1067px;top:620.8px;width:5px;height:1.5px;background:#569CD6;opacity:0.54"></div>
<div class="abs" style="left:1072px;top:620.8px;width:3px;height:1.5px;background:#4EC9B0;opacity:0.41"></div>
<div class="abs" style="left:1070px;top:623.0px;width:3px;height:1.5px;background:#C586C0;opacity:0.50"></div>
<div class="abs" style="left:1073px;top:623.0px;width:2px;height:1.5px;background:#DCDCAA;opacity:0.41"></div>
<div class="abs" style="left:1067px;top:625.2px;width:5px;height:1.5px;background:#569CD6;opacity:0.54"></div>
<div class="abs" style="left:1072px;top:625.2px;width:3px;height:1.5px;background:#6A9955;opacity:0.41"></div>
<div class="abs" style="left:1067px;top:627.4px;width:8px;height:1.5px;background:#6A9955;opacity:0.41"></div>
<div class="abs" style="left:1064px;top:629.6px;width:11px;height:1.5px;background:#569CD6;opacity:0.45"></div>
<div class="abs" style="left:1064px;top:631.8px;width:2px;height:1.2px;background:#9a9a9a;opacity:0.45"></div>
<div class="abs" style="left:1067px;top:634.0px;width:8px;height:1.5px;background:#6A9955;opacity:0.41"></div>
<div class="abs" style="left:1064px;top:636.2px;width:5px;height:1.5px;background:#C586C0;opacity:0.54"></div>
<div class="abs" style="left:1070px;top:636.2px;width:5px;height:1.5px;background:#DCDCAA;opacity:0.41"></div>
<div class="abs" style="left:1067px;top:638.4px;width:5px;height:1.5px;background:#569CD6;opacity:0.54"></div>
<div class="abs" style="left:1072px;top:638.4px;width:3px;height:1.5px;background:#6A9955;opacity:0.41"></div>
<div class="abs" style="left:1065px;top:640.6px;width:10px;height:1.5px;background:#569CD6;opacity:0.45"></div>
<div class="abs" style="left:1064px;top:642.8px;width:2px;height:1.2px;background:#9a9a9a;opacity:0.45"></div>
<div class="abs" style="left:1067px;top:645.0px;width:8px;height:1.5px;background:#DCDCAA;opacity:0.36"></div>
<div class="abs" style="left:1070px;top:647.2px;width:3px;height:1.5px;background:#569CD6;opacity:0.50"></div>
<div class="abs" style="left:1073px;top:647.2px;width:2px;height:1.5px;background:#569CD6;opacity:0.41"></div>
<div class="abs" style="left:1070px;top:651.6px;width:3px;height:1.5px;background:#569CD6;opacity:0.50"></div>
<div class="abs" style="left:1073px;top:651.6px;width:2px;height:1.5px;background:#4FC1FF;opacity:0.41"></div>
<div class="abs" style="left:1067px;top:653.8px;width:8px;height:1.5px;background:#6A9955;opacity:0.41"></div>
<div class="abs" style="left:1065px;top:133.0px;width:1px;height:42px;background:#6A9955;opacity:0.45"></div>
<div class="abs" style="left:1065px;top:236.0px;width:1px;height:8px;background:#6A9955;opacity:0.45"></div>
<div class="abs" style="left:1065px;top:428.0px;width:1px;height:10px;background:#6A9955;opacity:0.45"></div></body></html>
